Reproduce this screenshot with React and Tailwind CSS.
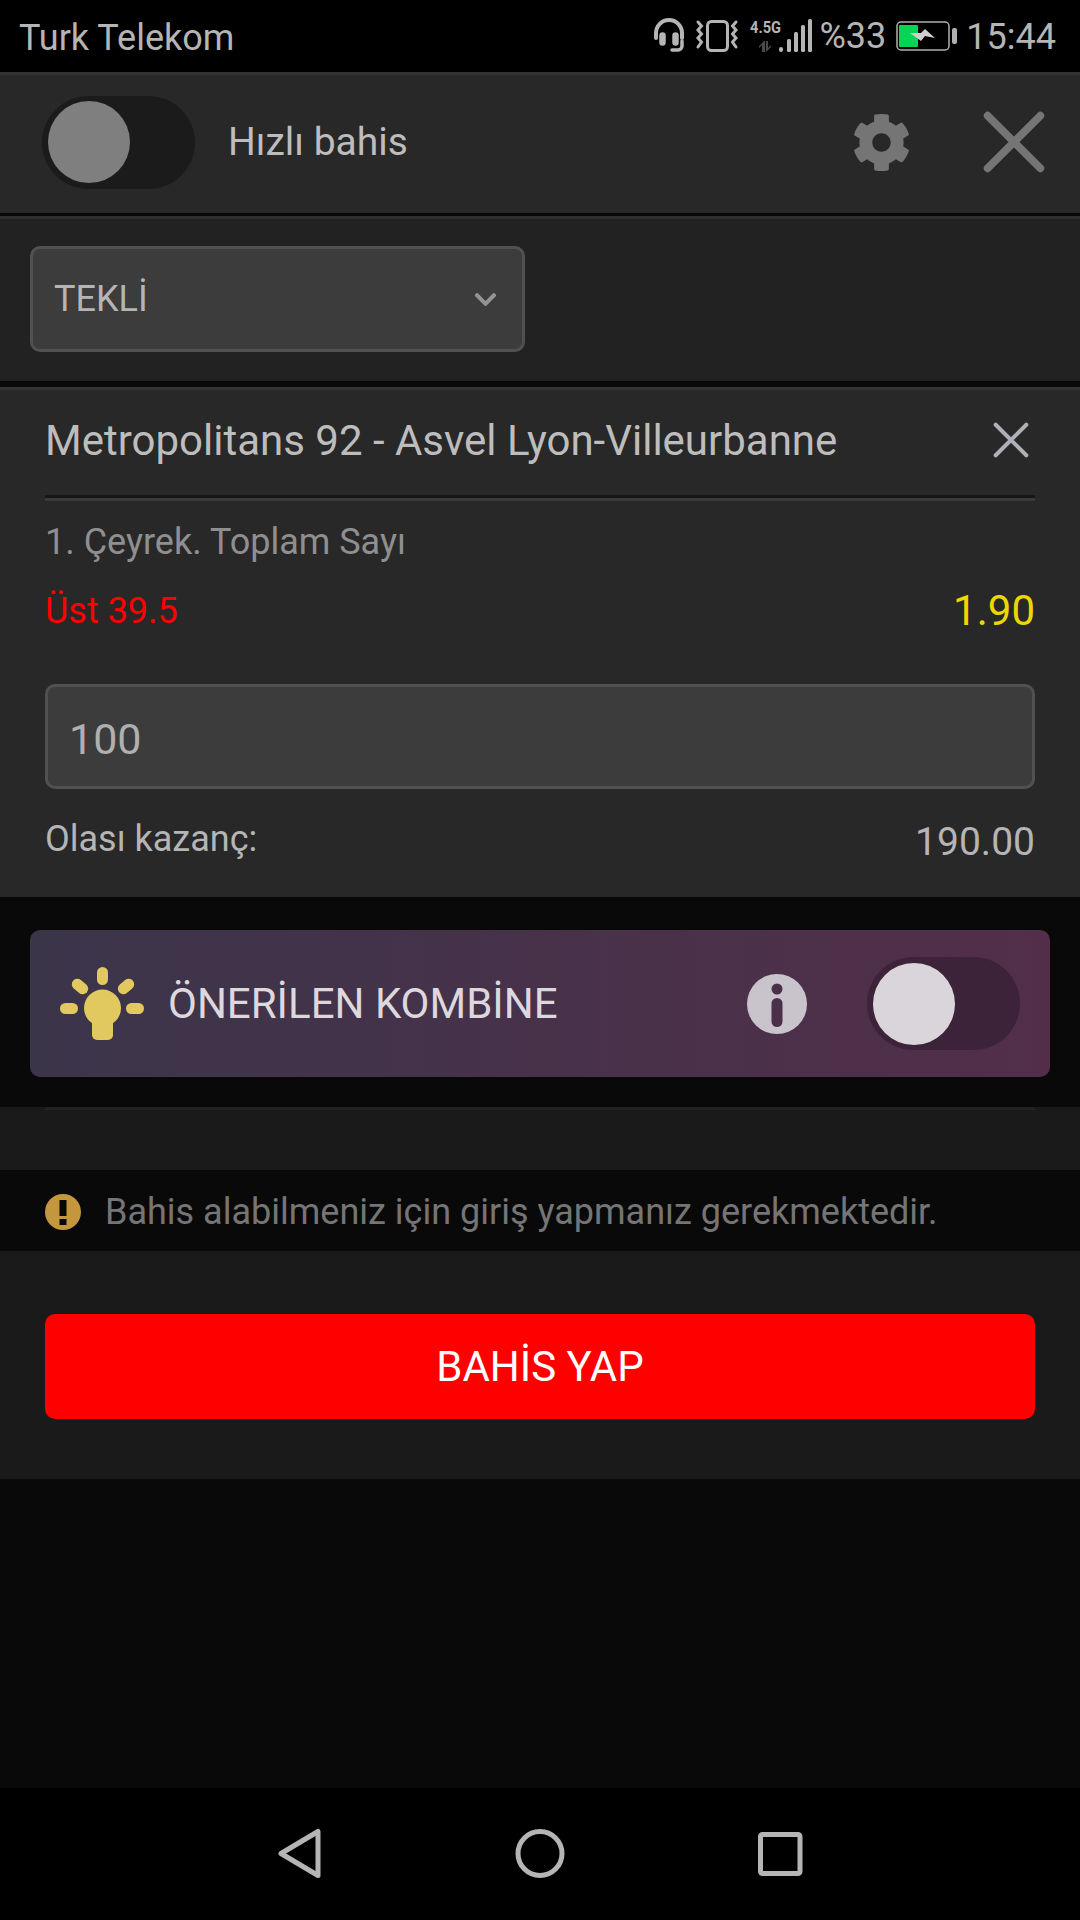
import React from 'react';
import { FaCog, FaChevronDown } from 'react-icons/fa';

// status bar drawings
const StatusIcons = () => (
  <svg width="158" height="56" viewBox="0 0 158 56" className="shrink-0">
    <g fill="none" stroke="#b5b5b5" strokeLinecap="round">
      {/* headset */}
      <path d="M2 30v-5a13 13 0 0 1 26 0v5" strokeWidth="4" />
      <rect x="6" y="25" width="5" height="12" rx="2.5" fill="#b5b5b5" strokeWidth="1.5" />
      <rect x="19" y="25" width="5" height="12" rx="2.5" fill="#b5b5b5" strokeWidth="1.5" />
      <path d="M28 33v5a4 4 0 0 1-4 4h-6" strokeWidth="3.5" />
      {/* vibrate phone */}
      <rect x="53.5" y="13.5" width="20" height="29" rx="4" strokeWidth="3" />
      <path d="M44 14l3.5 4-3.5 4 3.5 4-3.5 4 3.5 4-3.5 5M82 14l-3.5 4 3.5 4-3.5 4 3.5 4-3.5 4 3.5 5" strokeWidth="3" />
    </g>
    <text x="96" y="25" fill="#b5b5b5" fontSize="16" fontWeight="700" fontFamily="Roboto, sans-serif" textLength="31" lengthAdjust="spacingAndGlyphs">4.5G</text>
    <path d="M108 44v-7l-3 3v-2l5-5h1v11zM114 33v7l3-3v2l-5 5h0V33z" fill="#4a4a4a" />
    {/* signal bars */}
    <g fill="#b5b5b5">
      <rect x="125" y="39" width="4" height="5" rx="2" />
      <rect x="133" y="31" width="4" height="13" rx="1.5" />
      <rect x="140" y="24" width="4" height="20" rx="1.5" />
      <rect x="147" y="17" width="4" height="27" rx="1.5" />
      <rect x="154" y="11" width="4" height="33" rx="1.5" />
    </g>
  </svg>
);

const Battery = () => (
  <svg width="62" height="30" viewBox="0 0 62 30" className="shrink-0">
    <rect x="1" y="1" width="52" height="28" rx="4" fill="none" stroke="#b0b0b0" strokeWidth="1.5" />
    <rect x="3" y="4" width="19" height="22" rx="1" fill="#06d455" />
    <path d="M14 12L25 12L29 8L39 17L29 15L25 20Z" fill="#cfcfcf" />
    <rect x="56" y="7" width="5" height="16" rx="2" fill="#b0b0b0" />
  </svg>
);

const LightBulb = () => (
  <svg width="88" height="74" viewBox="0 0 88 74" fill="#e2c95f" className="shrink-0">
    <rect x="38" y="0" width="11" height="18" rx="5.5" />
    <rect x="12" y="14" width="18" height="11" rx="5.5" transform="rotate(40 21 19.5)" />
    <rect x="58" y="14" width="18" height="11" rx="5.5" transform="rotate(-40 67 19.5)" />
    <rect x="1" y="36" width="18" height="11" rx="5.5" />
    <rect x="67" y="36" width="18" height="11" rx="5.5" />
    <circle cx="43.5" cy="41" r="18.5" />
    <path d="M33 50h21v18a5 5 0 0 1-5 5H38a5 5 0 0 1-5-5z" />
  </svg>
);

const InfoIcon = () => (
  <svg width="60" height="60" viewBox="0 0 60 60" className="shrink-0">
    <circle cx="30" cy="30" r="30" fill="#c9c3cb" />
    <circle cx="30" cy="15" r="5.5" fill="#4a3049" />
    <rect x="24.5" y="24" width="11" height="29" rx="5.5" fill="#4a3049" />
  </svg>
);

const WarningIcon = () => (
  <svg width="36" height="36" viewBox="0 0 36 36" className="shrink-0">
    <circle cx="18" cy="18" r="18" fill="#c4973f" />
    <rect x="14.5" y="6" width="7" height="16" fill="#0a090a" />
    <rect x="14.5" y="25" width="7" height="6" fill="#0a090a" />
  </svg>
);

const Toggle = ({ knob, track }) => (
  <div className={`w-[153px] h-[93px] rounded-full flex items-center pl-[6px] ${track}`}>
    <div className={`w-[82px] h-[82px] rounded-full ${knob}`}></div>
  </div>
);

const CloseIcon = ({ size, stroke, width }) => (
  <svg width={size} height={size} viewBox="0 0 40 40" fill="none" stroke={stroke} strokeWidth={width} strokeLinecap="round">
    <path d="M3 3l34 34M37 3L3 37" />
  </svg>
);

export default function App() {
  return (
    <div className="w-[1080px] h-[1920px] flex flex-col bg-[#0a090a] text-[#b8b8b8] overflow-hidden font-['Roboto',sans-serif]">
      {/* status bar */}
      <div className="h-[72px] bg-black flex items-center pl-[19px] pr-[24px] text-[#b5b5b5]">
        <span className="text-[36px] mt-[3px]">Turk Telekom</span>
        <div className="ml-auto flex items-center">
          <StatusIcons />
          <span className="ml-[8px] text-[36px] leading-none mt-[-1px]">%33</span>
          <div className="ml-[10px] mt-[-1px]"><Battery /></div>
          <span className="ml-[8px] text-[36px] leading-none mt-[2px]">15:44</span>
        </div>
      </div>

      {/* quick bet header */}
      <div className="h-[141px] bg-[#282828] border-t-[3px] border-[#333] flex items-center pl-[42px] pr-[35px] pb-[4px]">
        <Toggle track="bg-[#1b1b1b]" knob="bg-[#7f7f7f]" />
        <span className="ml-[33px] text-[39px] text-[#bdbdbd]">Hızlı bahis</span>
        <FaCog className="ml-auto text-[#757575] mr-[72px]" size={59} />
        <CloseIcon size={62} stroke="#757575" width={5} />
      </div>

      {/* bet type */}
      <div className="mt-[3px] h-[165px] bg-[#222] border-t-[3px] border-[#2e2e2e] px-[30px] pt-[27px]">
        <div className="w-[495px] h-[106px] bg-[#3c3c3c] border-[3px] border-[#515151] rounded-[10px] flex items-center pl-[21px] pr-[24px] text-[#b5b5b5] text-[36px]">
          <span>TEKLİ</span>
          <FaChevronDown className="ml-auto text-[#949494]" size={25} />
        </div>
      </div>

      {/* selection card */}
      <div className="mt-[6px] h-[510px] bg-[#282828] border-t-[3px] border-[#333] px-[45px] flex flex-col">
        <div className="h-[111px] shrink-0 flex items-center justify-between border-b-[3px] border-[#3a3a3a] shadow-[inset_0_-3px_0_#171717] pb-[8px]">
          <span className="text-[42px] text-[#bdbdbd]">Metropolitans 92 - Asvel Lyon-Villeurbanne</span>
          <div className="mr-[6px]"><CloseIcon size={36} stroke="#aeb0b8" width={4.5} /></div>
        </div>
        <div className="mt-[21px] text-[36px] leading-[40px] text-[#8f8f8f]">1. Çeyrek. Toplam Sayı</div>
        <div className="mt-[27px] flex justify-between text-[36px] leading-[44px]">
          <span className="text-[#ff0000]">Üst 39.5</span>
          <span className="text-[#ecd800] text-[42px]">1.90</span>
        </div>
        <div className="mt-[51px] h-[105px] shrink-0 bg-[#3c3c3c] border-[3px] border-[#515151] rounded-[10px] flex items-center pl-[21px] pt-[6px] text-[43px] text-[#b0b0b0]">100</div>
        <div className="mt-[30px] flex justify-between items-start text-[#b5b5b5]">
          <span className="text-[36px] leading-[40px]">Olası kazanç:</span>
          <span className="text-[39px] leading-[44px] mt-[1px]">190.00</span>
        </div>
      </div>

      {/* suggested combo */}
      <div className="h-[210px] px-[30px] pt-[33px]">
        <div className="h-[147px] rounded-[10px] bg-gradient-to-r from-[#3b354a] to-[#522e4a] flex items-center pl-[29px] pr-[30px]">
          <LightBulb />
          <span className="ml-[21px] text-[42px] text-[#ddd8de]">ÖNERİLEN KOMBİNE</span>
          <div className="ml-auto mr-[60px]"><InfoIcon /></div>
          <Toggle track="bg-[#3c2339]" knob="bg-[#d9d5da]" />
        </div>
      </div>

      {/* login warning and submit */}
      <div className="h-[372px] bg-[#1a1a1a]">
        <div className="mx-[45px] h-[3px] bg-[#222]"></div>
        <div className="mt-[60px] h-[81px] bg-[#0a090a] flex items-center pl-[45px] pt-[2px] text-[36px] text-[#757575]">
          <div className="mr-[24px]"><WarningIcon /></div>
          <span>Bahis alabilmeniz için giriş yapmanız gerekmektedir.</span>
        </div>
        <div className="mt-[63px] mx-[45px] h-[105px] bg-[#ff0000] rounded-[10px] flex items-center justify-center text-[42px] text-white">BAHİS YAP</div>
      </div>

      <div className="flex-1"></div>

      {/* nav bar */}
      <div className="h-[132px] bg-black flex items-center justify-center">
        <svg width="600" height="60" viewBox="0 0 600 60" fill="none" stroke="#b5b5b5" strokeWidth="5" strokeLinejoin="round">
          <path d="M41 29.5L78 7.5v44z" />
          <circle cx="300" cy="29.5" r="22" />
          <rect x="520.5" y="10.5" width="39.5" height="39" rx="2" />
        </svg>
      </div>
    </div>
  );
}
